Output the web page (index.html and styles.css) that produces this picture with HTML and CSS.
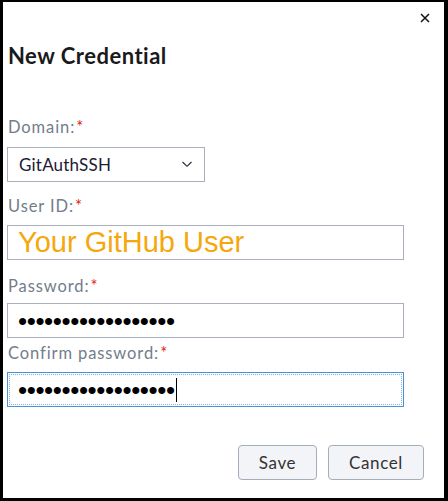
FILE: index.html
```html
<!DOCTYPE html>
<html lang="en">
<head>
<meta charset="utf-8">
<title>New Credential</title>
<link rel="stylesheet" href="styles.css">
</head>
<body>
<div class="dialog">
  <div class="dialog-header">
    <button class="close" aria-label="Close">
      <svg width="10" height="10" viewBox="0 0 10 10"><path d="M1 1 L9 9 M9 1 L1 9" stroke="#111" stroke-width="1.5" fill="none"/></svg>
    </button>
  </div>
  <h1 class="title">New Credential</h1>

  <div class="field field-domain">
    <div class="label">Domain:<span class="req">*</span></div>
    <div class="select">
      <span class="select-text">GitAuthSSH</span>
      <svg class="chevron" width="12" height="8" viewBox="0 0 12 8"><path d="M1.5 2 L6 6.3 L10.5 2" stroke="#1d2433" stroke-width="1.1" fill="none"/></svg>
    </div>
  </div>

  <div class="field field-user">
    <div class="label">User ID:<span class="req">*</span></div>
    <div class="input"><span class="user-text">Your GitHub User</span></div>
  </div>

  <div class="field field-pass">
    <div class="label">Password:<span class="req">*</span></div>
    <div class="input"><span class="dots">••••••••••••••••••</span></div>
  </div>

  <div class="field field-confirm">
    <div class="label">Confirm password:<span class="req">*</span></div>
    <div class="input focused"><span class="dots">••••••••••••••••••</span><span class="caret"></span></div>
  </div>

  <div class="actions">
    <button class="btn btn-save">Save</button>
    <button class="btn btn-cancel">Cancel</button>
  </div>
</div>
</body>
</html>
```

FILE: styles.css
```css
* { box-sizing: border-box; }
html, body { margin: 0; padding: 0; background: #fff; }
body { font-family: Lato, "Open Sans", sans-serif; }

.dialog {
  width: 448px;
  height: 501px;
  border-style: solid;
  border-color: #000;
  border-width: 2px 4px 3px 3px;
  padding: 0 0 0 4px;
  display: flex;
  flex-direction: column;
  background: #fff;
}

.dialog-header {
  display: flex;
  justify-content: flex-end;
  padding: 11px 14px 0 0;
  height: 23px;
}
.close {
  border: 0;
  background: none;
  padding: 0;
  width: 10px;
  height: 10px;
  display: block;
}
.close svg { display: block; }

.title {
  margin: 17px 0 0 1px;
  font-size: 22px;
  line-height: 28px;
  font-weight: 700;
  letter-spacing: 0.5px;
  color: #1a1a1a;
}

.label {
  font-size: 16.5px;
  line-height: 20px;
  letter-spacing: 0.9px;
  color: #737d8c;
  padding-left: 1px;
}
.req { color: #e0281b; margin-left: 1px; }

.field-domain { margin-top: 47px; }
.field-user { margin-top: 14px; }
.field-pass { margin-top: 16px; }
.field-confirm { margin-top: 5px; }

.select {
  margin-top: 10px;
  width: 198px;
  height: 35px;
  border: 1px solid #a9b0bb;
  display: flex;
  align-items: center;
  justify-content: space-between;
  padding: 0 11px 0 11px;
}
.select-text { font-size: 17px; letter-spacing: 0.2px; color: #1b2030; }
.chevron { display: block; margin-top: -2px; }

.input {
  width: 397px;
  height: 35px;
  border: 1px solid #a9b0bb;
  display: flex;
  align-items: center;
  padding-left: 10px;
}
.field-user .input { margin-top: 9px; }
.field-pass .input { margin-top: 7px; }
.field-confirm .input { margin-top: 9px; }

.user-text {
  font-family: "Liberation Sans", Arial, sans-serif;
  font-size: 29px;
  color: #f5a70d;
  line-height: 1;
}

.dots {
  font-family: "Liberation Sans", Arial, sans-serif;
  font-size: 26px;
  letter-spacing: -0.4px;
  color: #000;
  line-height: 1;
}

.input.focused {
  border: 1px solid #4a90d2;
  outline: 1px dotted #7ab3e6;
  outline-offset: -3px;
}
.caret {
  display: block;
  width: 1px;
  height: 24px;
  background: #000;
  margin-left: 1px;
}

.actions {
  margin-top: 38px;
  display: flex;
  justify-content: flex-end;
  gap: 11px;
  padding-right: 20px;
}
.btn {
  height: 35px;
  border: 1px solid #a5adba;
  border-radius: 4px;
  background: #f3f4f7;
  font-family: Lato, "Open Sans", sans-serif;
  font-size: 17px;
  letter-spacing: 0.6px;
  color: #333;
  padding: 0;
}
.btn-save { width: 79px; }
.btn-cancel { width: 96px; }
```
